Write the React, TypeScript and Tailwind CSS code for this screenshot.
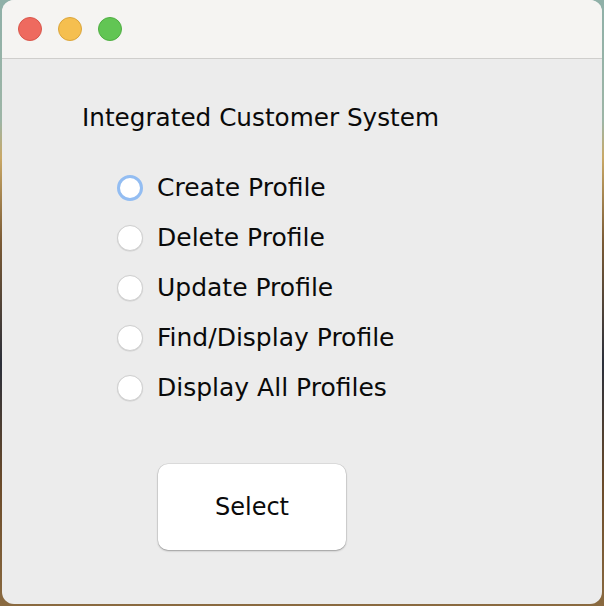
import React from "react";

const options = [
  "Create Profile",
  "Delete Profile",
  "Update Profile",
  "Find/Display Profile",
  "Display All Profiles",
];

export default function App() {
  return (
    <div className="w-[604px] h-[606px] bg-[linear-gradient(180deg,#8fb0a8_0%,#9db5a6_20%,#c9a866_26%,#7a5a35_40%,#2b2f3a_60%,#6b4b2a_80%,#8a6a40_100%)] pl-[2px] pr-[2px] pb-[2px] overflow-hidden">
      <div
        className="w-[600px] h-[604px] rounded-[12px] overflow-hidden flex flex-col bg-[#ececec]"
        style={{ fontFamily: '"DejaVu Sans", Verdana, sans-serif' }}
      >
        <div className="h-[59px] shrink-0 bg-[#f5f4f2] border-b border-[#cfcecc] flex items-center pl-[16px] gap-[16px] pb-[1px]">
          <div className="w-[24px] h-[24px] rounded-full bg-[#ee6a5f] border border-[#d9564b]" />
          <div className="w-[24px] h-[24px] rounded-full bg-[#f5bf4f] border border-[#dba53b]" />
          <div className="w-[24px] h-[24px] rounded-full bg-[#62c554] border border-[#4fae42]" />
        </div>
        <div className="flex flex-col pt-[44px]">
          <div className="h-[30px] flex items-center pl-[80px] text-[24.7px] text-[#0a0a0a]">
            Integrated Customer System
          </div>
          <div className="flex flex-col mt-[30px]">
            {options.map((o, i) => (
              <div key={o} className="h-[50px] flex items-center pl-[115px]">
                {i === 0 ? (
                  <div className="w-[26px] h-[26px] rounded-full bg-white border-[3px] border-[#93bdf2]" />
                ) : (
                  <div className="w-[26px] h-[26px] rounded-full bg-white border border-[#cfcfcf] shadow-[0_0.5px_1px_rgba(0,0,0,0.12)]" />
                )}
                <span className="ml-[14px] text-[25px] text-[#0a0a0a]">{o}</span>
              </div>
            ))}
          </div>
          <div className="pl-[156px] mt-[51px]">
            <div className="w-[188px] h-[86px] rounded-[10px] bg-white shadow-[0_1px_2px_rgba(0,0,0,0.3),0_0_0_0.5px_rgba(0,0,0,0.12)] flex items-center justify-center text-[24px] text-[#0a0a0a]">
              Select
            </div>
          </div>
        </div>
      </div>
    </div>
  );
}
